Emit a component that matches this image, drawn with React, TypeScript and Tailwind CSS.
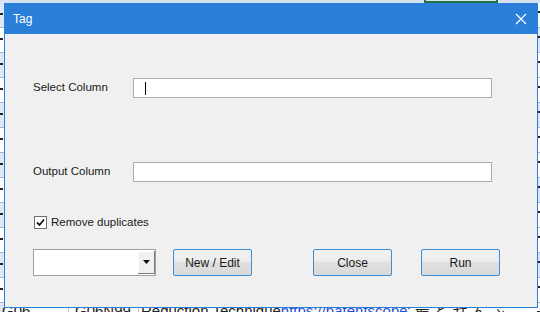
import React from 'react';

const font = { fontFamily: '"Liberation Sans", "Noto Sans CJK JP", Arial, sans-serif' };

const sideRows = [0, 1, 2, 3, 4, 5, 6, 7, 8, 9, 10, 11, 12];

const WinButton: React.FC<{ label: string; className?: string }> = ({ label, className }) => (
  <button
    className={`h-[27px] w-[79px] rounded-[2px] border border-[#3c8fd6] bg-[linear-gradient(to_bottom,#f2f2f2_0%,#ececec_45%,#dfdfdf_50%,#d9d9d9_100%)] text-[12px] text-[#1a1a1a] ${className ?? ''}`}
  >
    {label}
  </button>
);

const TextField: React.FC<{ caret?: boolean }> = ({ caret }) => (
  <div className="flex h-[20px] w-[359px] items-center border border-[#ababab] bg-white pl-[11px]">
    {caret && <div className="h-[13px] w-px bg-black" />}
  </div>
);

export default function App() {
  return (
    <div className="relative h-[312px] w-[540px] overflow-hidden bg-white" style={font}>
      {/* spreadsheet behind the dialog */}
      <div className="absolute inset-0">
        <div className="flex h-[3px] w-full bg-[#d6e2f2]">
          <div className="ml-[424px] h-[3px] w-[74px] border-x-2 border-b-2 border-[#217346]" />
        </div>
        <div className="absolute left-0 top-[3px] flex w-[4px] flex-col">
          {sideRows.map((r) => (
            <div
              key={r}
              className={`h-[25px] border-b border-[#9eb6d8] ${r % 2 === 0 ? 'bg-[#dde8f6]' : 'bg-white'}`}
            >
              <div className="mt-[10px] h-[2px] w-[3px] bg-[#222]" />
            </div>
          ))}
        </div>
        <div className="absolute right-0 top-[3px] flex w-[3px] flex-col">
          {sideRows.map((r) => (
            <div
              key={r}
              className={`h-[25px] border-b border-[#9eb6d8] ${r % 3 === 1 ? 'bg-[#dde8f6]' : 'bg-white'}`}
            >
              <div className="mt-[8px] h-[2px] w-[3px] bg-[#222]" />
            </div>
          ))}
        </div>
        <div className="absolute left-0 top-[302px] flex h-[20px] w-full items-start text-[15px] leading-[18px] text-[#222]">
          <div className="w-[69px] border-r border-[#c8c8c8] pl-[2px]">G06</div>
          <div className="w-[70px] border-r border-[#c8c8c8] pl-[6px]">G06N99</div>
          <div className="whitespace-nowrap pl-[2px]">
            Reduction Technique<span className="text-[#1f4fd6] underline">https://patentscope</span>
            <span>' 最 ど ぜ ん ふ</span>
          </div>
        </div>
      </div>

      {/* dialog window */}
      <div className="absolute left-[4px] top-[3px] flex h-[305px] w-[534px] flex-col border border-[#2b7fd9] bg-[#f0f0f0]">
        <div className="flex h-[30px] shrink-0 items-center justify-between bg-[#2b7fd9] pl-[8px] pr-[9px] text-[12px] text-white">
          <span>Tag</span>
          <svg width="12" height="12" viewBox="0 0 12 12" className="mr-[1px]">
            <path d="M1 1 L11 11 M11 1 L1 11" stroke="white" strokeWidth="1.2" />
          </svg>
        </div>

        <div className="flex flex-1 flex-col px-[28px] text-[11.5px] text-[#1a1a1a]">
          <div className="mt-[44px] flex items-center">
            <span className="w-[100px]">Select Column</span>
            <TextField caret />
          </div>
          <div className="mt-[64px] flex items-center">
            <span className="w-[100px]">Output Column</span>
            <TextField />
          </div>
          <label className="mt-[32px] flex items-center">
            <div className="ml-[1px] flex h-[13px] w-[13px] items-center justify-center border border-[#707070] bg-white">
              <svg width="9" height="9" viewBox="0 0 9 9">
                <path d="M1 4.5 L3.5 7 L8 1.5" stroke="#111" strokeWidth="1.8" fill="none" />
              </svg>
            </div>
            <span className="ml-[4px]">Remove duplicates</span>
          </label>
          <div className="mt-[18px] flex items-center">
            <div className="flex h-[27px] w-[123px] border border-[#a0a0a0] bg-white">
              <div className="flex-1" />
              <div className="mt-[1px] flex h-[23px] w-[17px] items-center justify-center border-b border-r border-[#7a7a7a] border-l-white border-t-white bg-[#f0f0f0] shadow-[inset_1px_1px_0_#ffffff]">
                <svg width="7" height="4" viewBox="0 0 7 4">
                  <path d="M0 0 H7 L3.5 4 Z" fill="#111" />
                </svg>
              </div>
            </div>
            <WinButton label="New / Edit" className="ml-[17px]" />
            <WinButton label="Close" className="ml-[61px]" />
            <WinButton label="Run" className="ml-[29px]" />
          </div>
        </div>
      </div>
    </div>
  );
}
